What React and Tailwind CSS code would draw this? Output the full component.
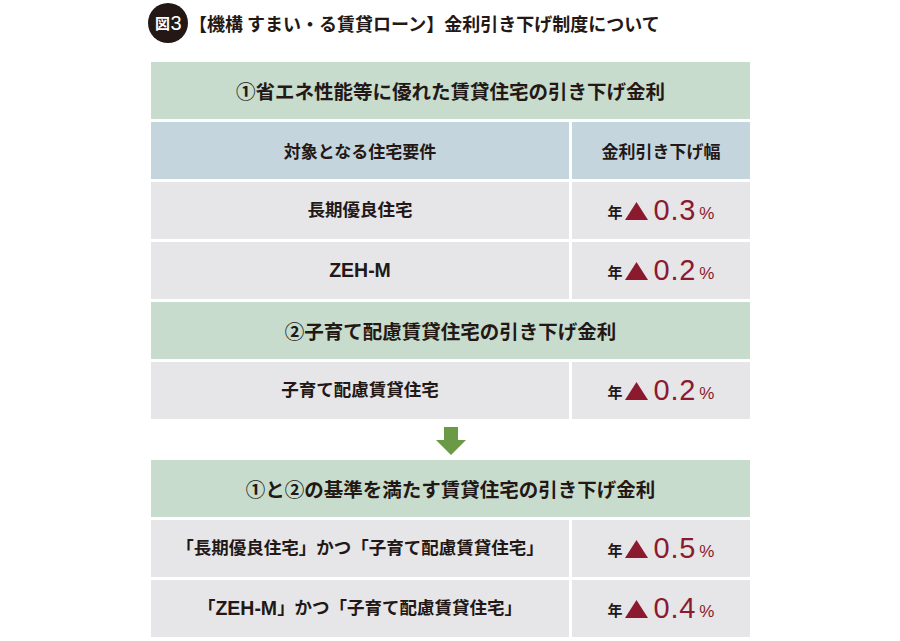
import React from "react";

const ink = "text-[#231815]";

function Rate({ v }) {
  return (
    <div className="flex items-center justify-center bg-[#e6e6e8] h-full">
      <div className="flex items-center">
        <span className={`text-[15px] font-bold ${ink} font-['Noto_Sans_CJK_JP',sans-serif] mt-[3px]`}>年</span>
        <svg width="23" height="18" viewBox="0 0 23 18" className="ml-[2px] mt-[1px]">
          <polygon points="11.5,0 23,18 0,18" fill="#8b1a2e" />
        </svg>
        <span className="ml-[6px] text-[29px] leading-none text-[#8b1a2e] font-['Liberation_Sans',sans-serif] tracking-[0.8px]">{v}</span>
        <span className="ml-[3px] mt-[6px] text-[17px] leading-none text-[#8b1a2e] font-['Liberation_Sans',sans-serif]">%</span>
      </div>
    </div>
  );
}

function GreenRow({ children }) {
  return (
    <div className={`h-[57px] bg-[#c7dccc] flex items-center justify-center text-[19.5px] font-bold ${ink}`}>
      {children}
    </div>
  );
}

function Row({ label, v }) {
  return (
    <div className="h-[57px] grid grid-cols-[418px_178px] gap-x-[3px]">
      <div className={`bg-[#e6e6e8] flex items-center justify-center text-[17.5px] font-bold ${ink} font-['Liberation_Sans','Noto_Sans_CJK_JP',sans-serif]`}>{label}</div>
      <Rate v={v} />
    </div>
  );
}

const Zeh = () => <span className="text-[19.5px]">ZEH-M</span>;

export default function App() {
  return (
    <div className="w-[900px] h-[641px] bg-white font-['Noto_Sans_CJK_JP','Noto_Sans',sans-serif]">
      <div className="h-[62px] flex items-start pl-[148px] pt-[3px]">
        <div className="w-[40px] h-[40px] rounded-full bg-[#231815] text-white flex items-center justify-center text-[15px] font-bold tracking-[-0.5px]">
          図<span className="font-['Liberation_Sans',sans-serif] font-normal text-[20px] ml-[1px]">3</span>
        </div>
        <div className={`ml-[1px] h-[40px] flex items-center text-[18px] font-bold ${ink}`}>
          【機構 すまい・る賃貸ローン】金利引き下げ制度について
        </div>
      </div>
      <div className="ml-[151px] w-[599px] flex flex-col gap-[3px]">
        <GreenRow>①省エネ性能等に優れた賃貸住宅の引き下げ金利</GreenRow>
        <div className="h-[57px] grid grid-cols-[418px_178px] gap-x-[3px]">
          <div className={`bg-[#c4d5de] flex items-center justify-center text-[17px] font-bold ${ink}`}>対象となる住宅要件</div>
          <div className={`bg-[#c4d5de] flex items-center justify-center text-[17px] font-bold ${ink}`}>金利引き下げ幅</div>
        </div>
        <Row label="長期優良住宅" v="0.3" />
        <Row label={<Zeh />} v="0.2" />
        <GreenRow>②子育て配慮賃貸住宅の引き下げ金利</GreenRow>
        <Row label="子育て配慮賃貸住宅" v="0.2" />
        <div className="h-[35px] flex items-center justify-center pt-[2px]">
          <svg width="30" height="28" viewBox="0 0 30 28">
            <polygon points="8,0 22,0 22,13 30,13 15,28 0,13 8,13" fill="#6b9a47" />
          </svg>
        </div>
        <GreenRow>①と②の基準を満たす賃貸住宅の引き下げ金利</GreenRow>
        <Row label="「長期優良住宅」かつ「子育て配慮賃貸住宅」" v="0.5" />
        <Row label={<>「<Zeh />」かつ「子育て配慮賃貸住宅」</>} v="0.4" />
      </div>
    </div>
  );
}
